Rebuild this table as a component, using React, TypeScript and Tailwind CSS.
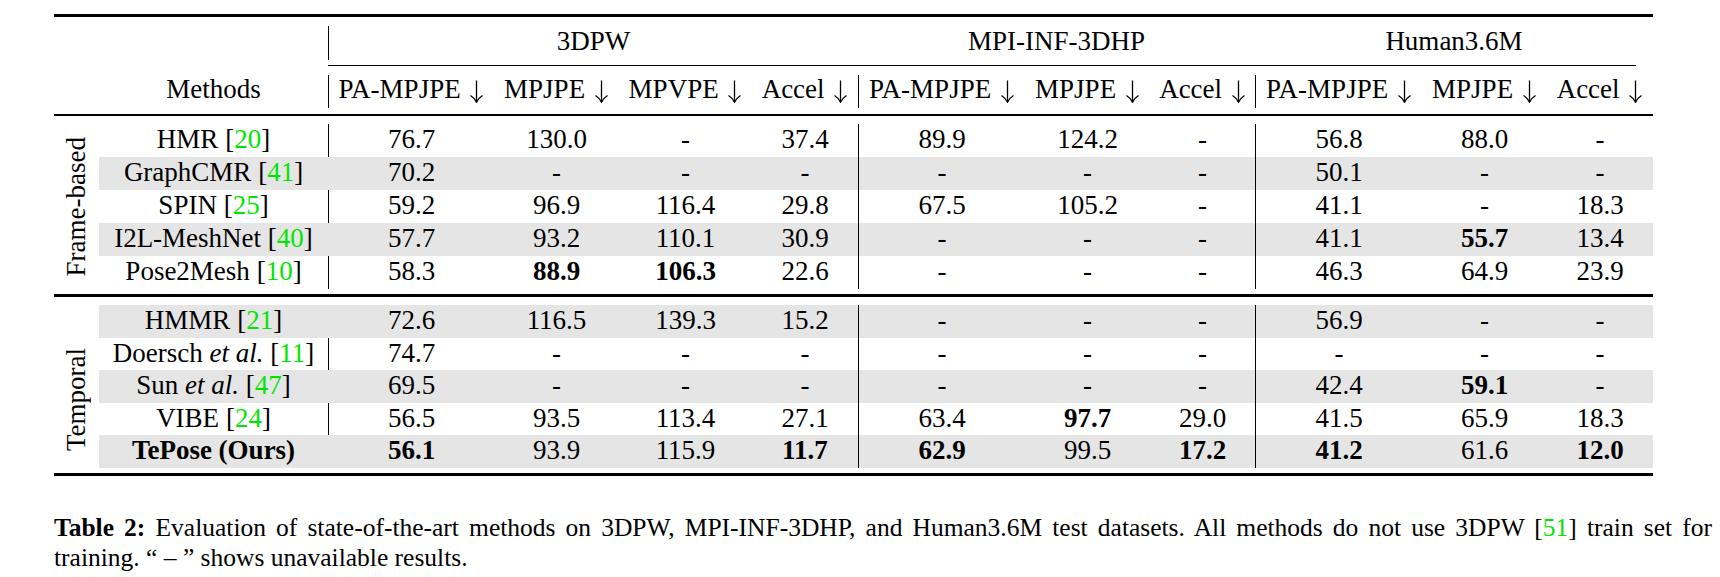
import React from "react";

const W = [
  "w-[166px]",
  "w-[125px]",
  "w-[133px]",
  "w-[106px]",
  "w-[167px]",
  "w-[125px]",
  "w-[105px]",
  "w-[167px]",
  "w-[125px]",
  "w-[106px]",
];

const HEAD = [
  "PA-MPJPE",
  "MPJPE",
  "MPVPE",
  "Accel",
  "PA-MPJPE",
  "MPJPE",
  "Accel",
  "PA-MPJPE",
  "MPJPE",
  "Accel",
];

function Cite({ n }: { n: string }) {
  return (
    <>
      [<span className="text-[#00e600]">{n}</span>]
    </>
  );
}

function Down() {
  return (
    <svg
      width="15"
      height="23"
      viewBox="0 0 15 23"
      className="ml-[2px] inline-block align-[-5px]"
      fill="none"
      stroke="black"
      strokeWidth="1.3"
    >
      <path d="M7.5 0.5 V22" />
      <path d="M1.5 15.5 Q5.5 18 7.5 22.3 Q9.5 18 13.5 15.5" />
    </svg>
  );
}

type Row = {
  name: React.ReactNode;
  grey?: boolean;
  v: string[];
  b?: number[];
};

const frame: Row[] = [
  {
    name: (
      <>
        HMR <Cite n="20" />
      </>
    ),
    v: ["76.7", "130.0", "-", "37.4", "89.9", "124.2", "-", "56.8", "88.0", "-"],
  },
  {
    name: (
      <>
        GraphCMR <Cite n="41" />
      </>
    ),
    grey: true,
    v: ["70.2", "-", "-", "-", "-", "-", "-", "50.1", "-", "-"],
  },
  {
    name: (
      <>
        SPIN <Cite n="25" />
      </>
    ),
    v: ["59.2", "96.9", "116.4", "29.8", "67.5", "105.2", "-", "41.1", "-", "18.3"],
  },
  {
    name: (
      <>
        I2L-MeshNet <Cite n="40" />
      </>
    ),
    grey: true,
    v: ["57.7", "93.2", "110.1", "30.9", "-", "-", "-", "41.1", "55.7", "13.4"],
    b: [8],
  },
  {
    name: (
      <>
        Pose2Mesh <Cite n="10" />
      </>
    ),
    v: ["58.3", "88.9", "106.3", "22.6", "-", "-", "-", "46.3", "64.9", "23.9"],
    b: [1, 2],
  },
];

const temporal: Row[] = [
  {
    name: (
      <>
        HMMR <Cite n="21" />
      </>
    ),
    grey: true,
    v: ["72.6", "116.5", "139.3", "15.2", "-", "-", "-", "56.9", "-", "-"],
  },
  {
    name: (
      <>
        Doersch <i>et al.</i> <Cite n="11" />
      </>
    ),
    v: ["74.7", "-", "-", "-", "-", "-", "-", "-", "-", "-"],
  },
  {
    name: (
      <>
        Sun <i>et al.</i> <Cite n="47" />
      </>
    ),
    grey: true,
    v: ["69.5", "-", "-", "-", "-", "-", "-", "42.4", "59.1", "-"],
    b: [8],
  },
  {
    name: (
      <>
        VIBE <Cite n="24" />
      </>
    ),
    v: ["56.5", "93.5", "113.4", "27.1", "63.4", "97.7", "29.0", "41.5", "65.9", "18.3"],
    b: [5],
  },
  {
    name: <b>TePose (Ours)</b>,
    grey: true,
    v: ["56.1", "93.9", "115.9", "11.7", "62.9", "99.5", "17.2", "41.2", "61.6", "12.0"],
    b: [0, 3, 4, 6, 7, 9],
  },
];

function borderFor(i: number, grey?: boolean) {
  if (i === 0) return grey ? "border-l border-[#e5e5e5]" : "border-l border-black";
  if (i === 4 || i === 7) return "border-l border-black";
  return "";
}

function DataRow({ r, h }: { r: Row; h: string }) {
  return (
    <div className={`flex ${h} leading-[30px] ${r.grey ? "bg-[#e5e5e5]" : ""}`}>
      <div className="w-[229px] text-center whitespace-nowrap">{r.name}</div>
      {r.v.map((x, i) => (
        <div
          key={i}
          className={`${W[i]} text-center ${borderFor(i, r.grey)} ${
            r.b?.includes(i) ? "font-bold" : ""
          }`}
        >
          {x}
        </div>
      ))}
    </div>
  );
}

export default function App() {
  return (
    <div className="min-h-[577px] w-[1720px] bg-white text-black [font-family:'Liberation_Serif',serif] pl-[54px] pt-[14px]">
      <div className="w-[1599px] text-[27px]">
        <div className="h-[3px] bg-black" />
        {/* group header */}
        <div className="mt-[9px] flex h-[34px] leading-[30px]">
          <div className="w-[274px]" />
          <div className="w-[530px] border-l border-black text-center">3DPW</div>
          <div className="w-[397px] text-center">MPI-INF-3DHP</div>
          <div className="w-[398px] text-center">Human3.6M</div>
        </div>
        <div className="mt-[5px] ml-[274px] h-px w-[1308px] bg-black" />
        {/* column header */}
        <div className="mt-[9px] flex h-[33px] leading-[29px]">
          <div className="w-[45px]" />
          <div className="w-[229px] text-center">Methods</div>
          {HEAD.map((t, i) => (
            <div key={i} className={`${W[i]} text-center whitespace-nowrap ${borderFor(i, false)}`}>
              {t} <Down />
            </div>
          ))}
        </div>
        <div className="mt-[6px] h-[2px] bg-black" />
        {/* frame-based */}
        <div className="mt-[8px] flex">
          <div className="flex w-[45px] items-center justify-center">
            <span className="rotate-180 leading-none [writing-mode:vertical-rl]">Frame-based</span>
          </div>
          <div>
            {frame.map((r, i) => (
              <DataRow key={i} r={r} h="h-[33px]" />
            ))}
          </div>
        </div>
        <div className="mt-[5px] h-[3px] bg-black" />
        {/* temporal */}
        <div className="mt-[8px] flex">
          <div className="flex w-[45px] items-center justify-center pt-[26px]">
            <span className="rotate-180 leading-none [writing-mode:vertical-rl]">Temporal</span>
          </div>
          <div>
            {temporal.map((r, i) => (
              <DataRow key={i} r={r} h="h-[32.6px]" />
            ))}
          </div>
        </div>
        <div className="mt-[5px] h-[3px] bg-black" />
      </div>
      {/* caption */}
      <div className="mt-[37px] w-[1658px] text-[25.5px] leading-[30px]">
        <div className="text-justify [text-align-last:justify]">
          <b>Table 2:</b> Evaluation of state-of-the-art methods on 3DPW, MPI-INF-3DHP, and Human3.6M
          test datasets. All methods do not use 3DPW [<span className="text-[#00e600]">51</span>] train
          set for
        </div>
        <div>training. “ – ” shows unavailable results.</div>
      </div>
    </div>
  );
}
